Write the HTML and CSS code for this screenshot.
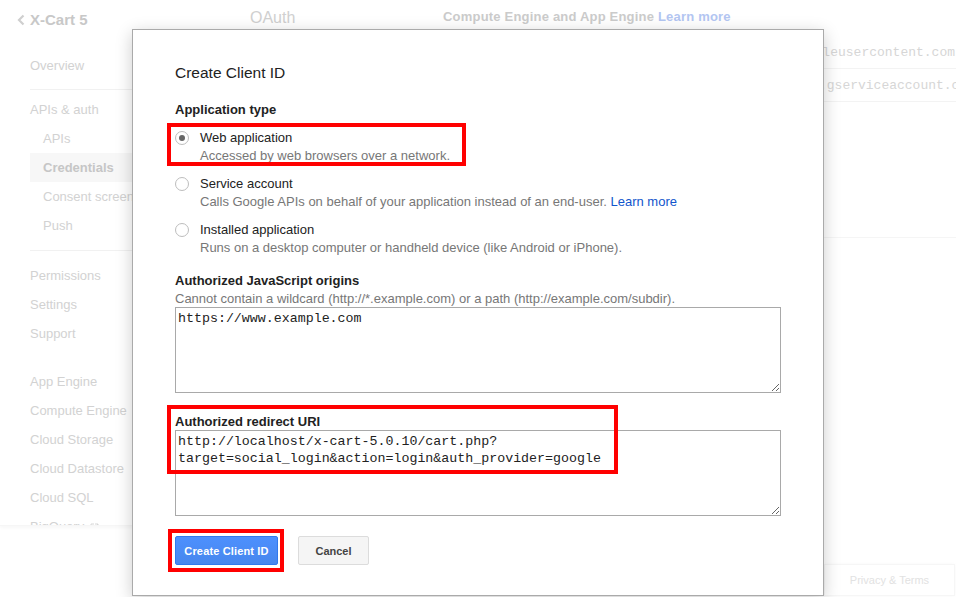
FILE: index.html
```html
<!DOCTYPE html>
<html lang="en">
<head>
<meta charset="utf-8">
<title>Create Client ID</title>
<link rel="stylesheet" href="styles.css">
</head>
<body>
<div class="page">
  <header class="topbar">
    <div class="brand">
      <svg class="chev" width="8" height="12" viewBox="0 0 8 12"><polyline points="6.5,1.5 2,6 6.5,10.5" fill="none" stroke="#cfcfcf" stroke-width="2.2"/></svg>
      <span>X-Cart 5</span>
    </div>
    <div class="page-title">OAuth</div>
    <div class="page-note">Compute Engine and App Engine <a class="note-link">Learn more</a></div>
  </header>
  <div class="layout">
    <nav class="sidebar">
      <div class="nav-item">Overview</div>
      <div class="nav-sep sep-a"></div>
      <div class="nav-item">APIs &amp; auth</div>
      <div class="nav-item sub">APIs</div>
      <div class="nav-item sub active">Credentials</div>
      <div class="nav-item sub">Consent screen</div>
      <div class="nav-item sub">Push</div>
      <div class="nav-sep sep-b"></div>
      <div class="nav-item">Permissions</div>
      <div class="nav-item">Settings</div>
      <div class="nav-item">Support</div>
      <div class="nav-gap"></div>
      <div class="nav-item">App Engine</div>
      <div class="nav-item">Compute Engine</div>
      <div class="nav-item">Cloud Storage</div>
      <div class="nav-item">Cloud Datastore</div>
      <div class="nav-item">Cloud SQL</div>
      <div class="nav-item">BigQuery <svg class="ext" width="9" height="9" viewBox="0 0 9 9"><path d="M4 1H1v7h7V5M5 1h3v3M8 1L4 5" fill="none" stroke="#d6d6d6" stroke-width="1"/></svg></div>
    </nav>
    <main class="content">
      <div class="key-row"><span class="key">123456789012-k3v9qe1l.apps.googleusercontent.com</span></div>
      <div class="key-row"><span class="key key-cut">123456789012@developer.gserviceaccount.com</span></div>
      <div class="key-blank"></div>
      <footer class="privacy">Privacy &amp; Terms</footer>
    </main>
  </div>
</div>

<div class="dialog">
  <h1 class="dlg-title">Create Client ID</h1>
  <div class="field-label first">Application type</div>
  <div class="options">
    <label class="option">
      <span class="radio checked"></span>
      <span class="opt-text">
        <span class="opt-name">Web application</span>
        <span class="opt-desc">Accessed by web browsers over a network.</span>
      </span>
    </label>
    <label class="option">
      <span class="radio"></span>
      <span class="opt-text">
        <span class="opt-name">Service account</span>
        <span class="opt-desc">Calls Google APIs on behalf of your application instead of an end-user. <a class="link">Learn more</a></span>
      </span>
    </label>
    <label class="option">
      <span class="radio"></span>
      <span class="opt-text">
        <span class="opt-name">Installed application</span>
        <span class="opt-desc">Runs on a desktop computer or handheld device (like Android or iPhone).</span>
      </span>
    </label>
  </div>
  <div class="field-label js">Authorized JavaScript origins</div>
  <div class="field-hint">Cannot contain a wildcard (http://*.example.com) or a path (http://example.com/subdir).</div>
  <textarea class="ta" readonly>https://www.example.com</textarea>
  <div class="field-label redir">Authorized redirect URI</div>
  <textarea class="ta" readonly>http://localhost/x-cart-5.0.10/cart.php?
target=social_login&amp;action=login&amp;auth_provider=google</textarea>
  <div class="actions">
    <button class="btn btn-primary">Create Client ID</button>
    <button class="btn btn-cancel">Cancel</button>
  </div>
  <span class="mark mark-1"></span>
  <span class="mark mark-2"></span>
  <span class="mark mark-3"></span>
</div>
</body>
</html>
```

FILE: styles.css
```css
html, body {
  margin: 0;
  padding: 0;
}
body {
  width: 956px;
  height: 597px;
  overflow: hidden;
  position: relative;
  background: #fff;
  font-family: "Liberation Sans", Arial, sans-serif;
  font-size: 13px;
  color: #222;
}
.page {
  display: flex;
  flex-direction: column;
  height: 597px;
}
.topbar {
  height: 36px;
  display: flex;
  align-items: center;
  flex: none;
}
.brand {
  width: 233px;
  margin-left: 17px;
  display: flex;
  align-items: center;
  gap: 5px;
  font-weight: bold;
  font-size: 15px;
  color: #c8c8c8;
  padding-top: 3px;
}
.page-title {
  width: 193px;
  font-size: 16px;
  color: #d0d0d0;
}
.page-note {
  font-weight: bold;
  font-size: 13px;
  letter-spacing: 0.2px;
  color: #cbcbcb;
  padding-bottom: 4px;
}
.note-link {
  color: #b3c6f2;
}
.layout {
  flex: 1;
  display: grid;
  grid-template-columns: 220px 1fr;
  min-height: 0;
}
.sidebar {
  padding: 15px 0 0 30px;
  height: 474px;
  overflow: hidden;
  border-bottom: 1px solid #f6f6f6;
  box-shadow: 0 2px 3px rgba(0,0,0,0.03);
}
.nav-item {
  height: 29px;
  line-height: 29px;
  font-size: 13px;
  color: #d2d2d2;
  white-space: nowrap;
}
.nav-item.sub {
  padding-left: 13px;
}
.nav-item.active {
  background: #f7f7f7;
  font-weight: bold;
  color: #c6c6c6;
}
.ext {
  vertical-align: -1px;
  margin-left: 2px;
}
.nav-sep {
  height: 1px;
  background: #f1f1f1;
}
.sep-a {
  margin: 9px 0 5px;
}
.sep-b {
  margin: 10px 0 10px;
}
.nav-gap {
  height: 19px;
}
.content {
  display: flex;
  flex-direction: column;
  min-width: 0;
  overflow: hidden;
}
.key-row {
  height: 32px;
  line-height: 34px;
  border-bottom: 1px solid #f3f3f3;
  display: flex;
  justify-content: flex-end;
  overflow: hidden;
  white-space: nowrap;
}
.key {
  font-family: "Liberation Mono", "Courier New", monospace;
  font-size: 13px;
  color: #d6d6d6;
  padding-right: 1px;
}
.key-cut {
  margin-right: -20px;
}
.key-blank {
  height: 135px;
  border-bottom: 1px solid #f5f5f5;
}
.privacy {
  margin-top: auto;
  align-self: flex-end;
  width: 131px;
  height: 32px;
  box-sizing: border-box;
  margin-right: 1px;
  margin-bottom: 1px;
  border: 1px solid #f6f6f6;
  box-shadow: 0 0 3px rgba(0,0,0,0.03);
  text-align: center;
  line-height: 30px;
  font-size: 11px;
  color: #e2e2e2;
}

/* dialog */
.dialog {
  position: absolute;
  left: 132px;
  top: 29px;
  width: 692px;
  height: 567px;
  box-sizing: border-box;
  border: 1px solid #aaa;
  background: #fff;
  box-shadow: 0 4px 16px rgba(0,0,0,0.2);
  padding: 33px 42px 0;
}
.dlg-title {
  margin: 0;
  font-size: 15.5px;
  font-weight: normal;
  line-height: 20px;
  color: #222;
}
.field-label {
  font-weight: bold;
  line-height: 18px;
  color: #222;
}
.field-label.first {
  margin-top: 18px;
}
.options {
  margin-top: 10px;
  display: flex;
  flex-direction: column;
  gap: 10px;
}
.option {
  display: flex;
  gap: 11px;
}
.radio {
  width: 14px;
  height: 14px;
  box-sizing: border-box;
  border: 1px solid #bdbdbd;
  border-radius: 50%;
  background: #fff;
  margin-top: 2px;
  display: flex;
  align-items: center;
  justify-content: center;
  flex: none;
}
.radio.checked::after {
  content: "";
  width: 6px;
  height: 6px;
  border-radius: 50%;
  background: #666;
}
.opt-text {
  display: flex;
  flex-direction: column;
}
.opt-name {
  line-height: 18px;
  color: #222;
}
.opt-desc {
  line-height: 18px;
  color: #777;
}
.link {
  color: #15c;
}
.field-label.js {
  margin-top: 15px;
}
.field-hint {
  line-height: 17px;
  color: #777;
}
.ta {
  display: block;
  width: 606px;
  height: 86px;
  box-sizing: border-box;
  margin: 0;
  border: 1px solid #a9a9a9;
  padding: 2px 2px;
  font-family: "Liberation Mono", "Courier New", monospace;
  font-size: 13.3px;
  line-height: 17px;
  color: #222;
  resize: vertical;
  outline: none;
}
.field-label.redir {
  margin-top: 20px;
  line-height: 17px;
}
.actions {
  margin-top: 20px;
  display: flex;
  gap: 20px;
}
.btn {
  height: 29px;
  box-sizing: border-box;
  border-radius: 2px;
  font-family: "Liberation Sans", Arial, sans-serif;
  font-size: 11px;
  font-weight: bold;
  padding: 0 4px;
  margin: 0;
}
.btn-primary {
  width: 103px;
  letter-spacing: 0.15px;
  background: linear-gradient(#4d90fe, #4787ed);
  border: 1px solid #3079ed;
  color: #fff;
}
.btn-cancel {
  width: 71px;
  background: #f5f5f5;
  border: 1px solid #dcdcdc;
  color: #444;
}
.mark {
  position: absolute;
  border: 4px solid #f00;
  box-sizing: border-box;
  pointer-events: none;
}
.mark-1 {
  left: 34px;
  top: 93px;
  width: 299px;
  height: 43px;
}
.mark-2 {
  left: 34px;
  top: 375px;
  width: 451px;
  height: 69px;
}
.mark-3 {
  left: 35px;
  top: 499px;
  width: 116px;
  height: 43px;
}
```
